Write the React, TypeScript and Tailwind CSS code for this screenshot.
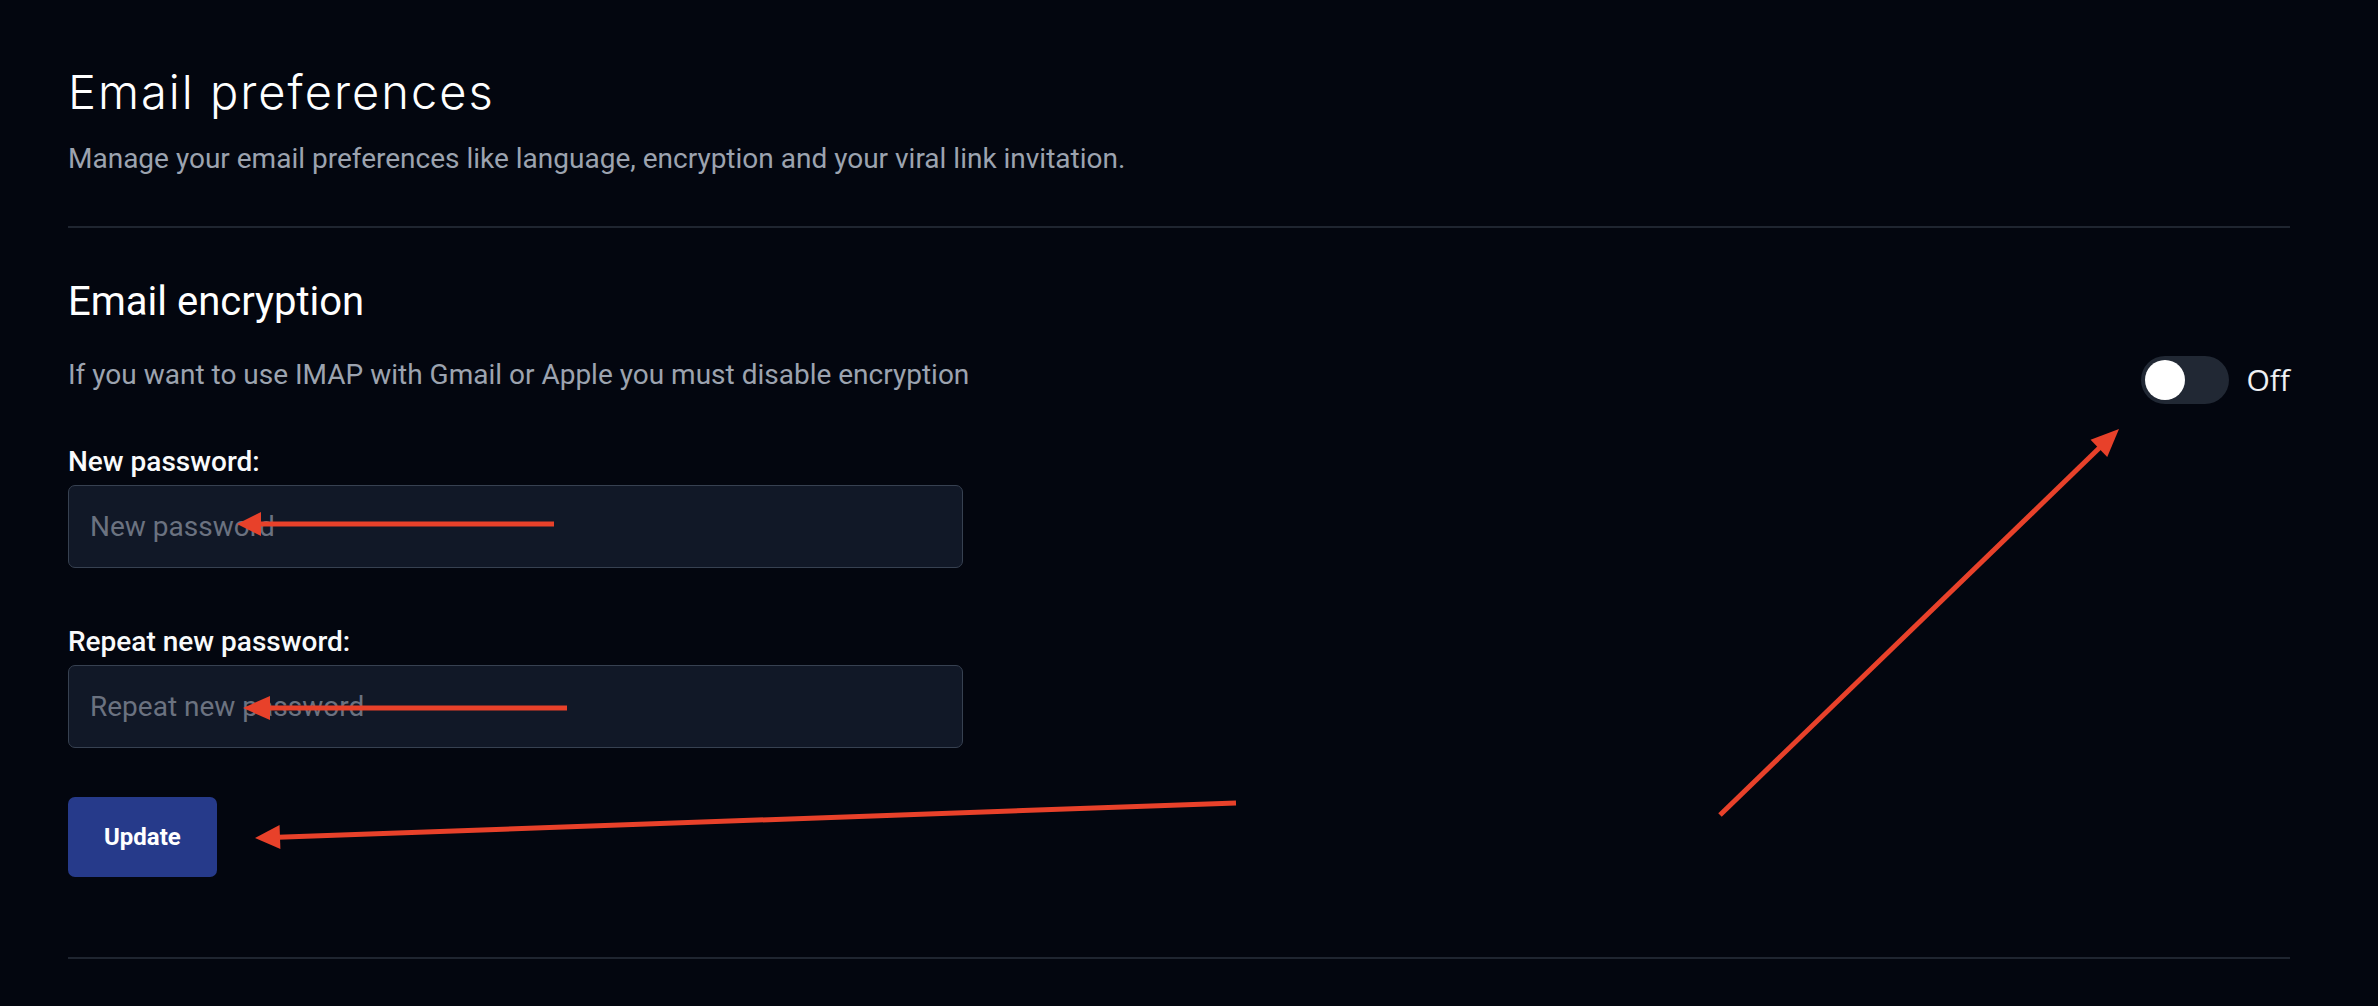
import React from 'react';

type Arrow = { from: [number, number]; to: [number, number]; head: number; half: number; width: number };

// annotation arrows drawn over the page
const arrows: Arrow[] = [
  { from: [554, 524], to: [237, 524], head: 24, half: 12, width: 5 },
  { from: [567, 708], to: [243, 708], head: 27, half: 12, width: 5 },
  { from: [1236, 803], to: [255, 838], head: 25, half: 12, width: 5 },
  { from: [1720, 815], to: [2119, 429], head: 28, half: 12, width: 5 },
];

function ArrowShape({ from, to, head, half, width }: Arrow) {
  const dx = to[0] - from[0];
  const dy = to[1] - from[1];
  const len = Math.hypot(dx, dy);
  const ux = dx / len;
  const uy = dy / len;
  const bx = to[0] - ux * head;
  const by = to[1] - uy * head;
  const px = -uy;
  const py = ux;
  const points = [
    `${to[0]},${to[1]}`,
    `${bx + px * half},${by + py * half}`,
    `${bx - px * half},${by - py * half}`,
  ].join(' ');
  return (
    <g>
      <line x1={from[0]} y1={from[1]} x2={bx + ux * 2} y2={by + uy * 2} stroke="#e8412a" strokeWidth={width} />
      <polygon points={points} fill="#e8412a" />
    </g>
  );
}

function PasswordField({ label, placeholder }: { label: string; placeholder: string }) {
  return (
    <div className="flex flex-col">
      <label className="text-[28px] leading-none font-medium text-[#f9fafb]">{label}</label>
      <input
        type="password"
        placeholder={placeholder}
        className="mt-[9px] w-[895px] h-[83px] rounded-[7px] border border-[#374151] bg-[#111827] px-[21px] text-[28px] text-white placeholder:text-[#6b7280] outline-none"
      />
    </div>
  );
}

export default function App() {
  return (
    <div className="relative min-h-[1006px] w-full bg-[#03060f] font-['Roboto',sans-serif] overflow-hidden">
      <div className="w-[2222px] ml-[68px] pt-[68px] flex flex-col">
        {/* Header */}
        <h1 className="text-[47px] leading-none font-light tracking-[2px] text-white font-['Inter',sans-serif]">
          Email preferences
        </h1>
        <p className="mt-[30px] text-[28px] leading-none text-[#9ca3af]">
          Manage your email preferences like language, encryption and your viral link invitation.
        </p>

        <div className="mt-[53px] h-[2px] bg-[#1f2530]" />

        {/* Encryption section */}
        <h2 className="mt-[54px] text-[40px] leading-none text-white">Email encryption</h2>

        <div className="mt-[34px] flex justify-between items-start">
          <p className="mt-[5px] text-[28px] leading-none text-[#9ca3af]">
            If you want to use IMAP with Gmail or Apple you must disable encryption
          </p>
          <div className="flex items-center gap-[17px]">
            <button className="w-[88px] h-[48px] rounded-full bg-[#212834] p-[4px] flex items-center">
              <span className="block w-[40px] h-[40px] rounded-full bg-white" />
            </button>
            <span className="text-[30px] leading-none text-[#eef0f3] font-['Open_Sans',sans-serif]">Off</span>
          </div>
        </div>

        <div className="mt-[44px]">
          <PasswordField label="New password:" placeholder="New password" />
        </div>
        <div className="mt-[60px]">
          <PasswordField label="Repeat new password:" placeholder="Repeat new password" />
        </div>

        <div className="mt-[49px]">
          <button className="h-[80px] px-[36px] rounded-[7px] bg-[#263a8a] text-white text-[24px] font-bold">
            Update
          </button>
        </div>

        <div className="mt-[80px] h-[2px] bg-[#1f2530]" />
      </div>

      <svg className="absolute inset-0 pointer-events-none" width="2378" height="1006" viewBox="0 0 2378 1006">
        {arrows.map((a, i) => (
          <ArrowShape key={i} {...a} />
        ))}
      </svg>
    </div>
  );
}
